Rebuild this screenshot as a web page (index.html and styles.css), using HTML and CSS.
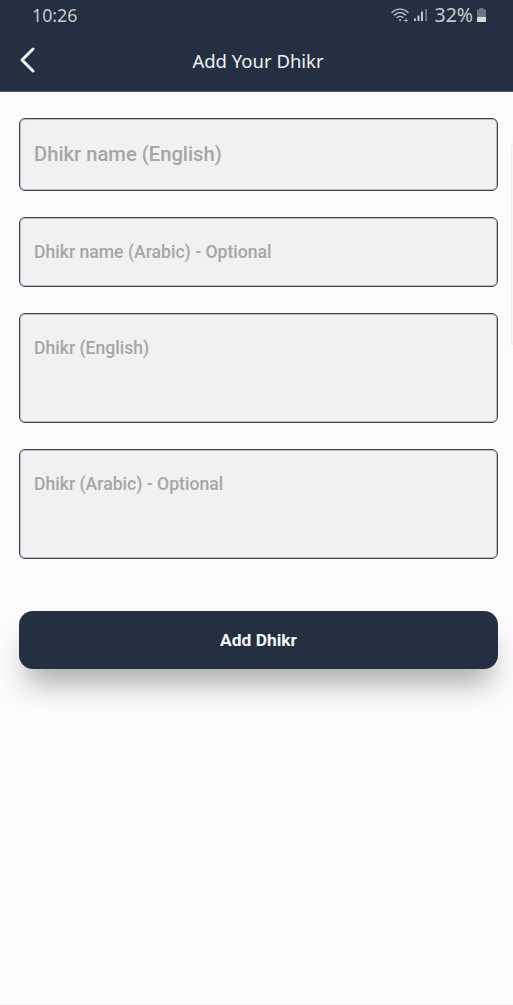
FILE: index.html
```html
<!DOCTYPE html>
<html lang="en">
<head>
<meta charset="utf-8">
<title>Add Your Dhikr</title>
<link rel="stylesheet" href="styles.css">
</head>
<body>
<div class="screen">
  <header class="header">
    <div class="status">
      <span class="time">10:26</span>
      <div class="status-right">
        <svg class="wifi" width="20" height="16" viewBox="0 0 20 16" fill="none" stroke="#c3c8ce" stroke-linecap="round">
          <path d="M1 5.5C5.5 1 12.500 1 17 5.500" stroke-width="1.300"/>
          <path d="M3.500 8C6.800 5 11.200 5 14.500 8" stroke-width="1.300"/>
          <path d="M6 10.500C8 9 10 9 12 10.500" stroke-width="1.300"/>
          <circle cx="9" cy="13" r="1" fill="#c3c8ce" stroke="none"/>
          <path d="M13.500 13.500h3M15 12v3" stroke-width=".8"/>
        </svg>
        <svg class="signal" width="14" height="14" viewBox="0 0 14 14" fill="#c3c8ce">
          <rect x="0" y="10.500" width="2" height="2.500"/>
          <rect x="3.500" y="7.500" width="2" height="5.500"/>
          <rect x="7" y="3.500" width="2" height="9.500"/>
          <rect x="11.500" y="1" width="1.200" height="12" opacity=".7"/>
        </svg>
        <span class="pct">32%</span>
        <svg class="battery" width="11" height="16" viewBox="0 0 11 16">
          <path d="M3.500 1h4v1.500H10V15H1V2.500h2.500z" fill="#6d7580"/>
          <rect x="1" y="10" width="9" height="5" fill="#d5d8dc"/>
        </svg>
      </div>
    </div>
    <div class="nav">
      <svg class="back" width="18" height="28" viewBox="0 0 18 28" fill="none" stroke="#f4f5f6" stroke-width="3" stroke-linecap="round" stroke-linejoin="round">
        <path d="M15 3 4 14l11 11"/>
      </svg>
      <h1 class="title">Add Your Dhikr</h1>
    </div>
  </header>
  <main class="content">
    <div class="side-panel"></div>
    <form class="form">
      <div class="field field-name"><span class="ph ph-lg">Dhikr name (English)</span></div>
      <div class="field field-sub"><span class="ph">Dhikr name (Arabic) - Optional</span></div>
      <div class="field field-area"><span class="ph">Dhikr (English)</span></div>
      <div class="field field-area"><span class="ph">Dhikr (Arabic) - Optional</span></div>
      <button class="submit" type="button">Add Dhikr</button>
    </form>
  </main>
</div>
</body>
</html>
```
FILE: styles.css
```css
* { box-sizing: border-box; }
html, body { margin: 0; padding: 0; }
body { background: #fbfbfb; font-family: Roboto, "Noto Sans", sans-serif; }
.screen { width: 513px; height: 1005px; display: flex; flex-direction: column; overflow: hidden; border-bottom: 1px solid #f3f3f3; }
.header { height: 92px; flex: none; background: #243041; border-bottom: 1px solid #4d5866; }
.status { height: 30px; padding: 0 26px 0 32px; display: flex; align-items: center; justify-content: space-between; color: #c6cace; }
.time { font-family: "Noto Sans", sans-serif; font-size: 17.800px; line-height: 30px; }
.status-right { display: flex; align-items: center; }
.wifi { margin-right: 3px; }
.signal { margin-right: 6px; }
.pct { font-family: "Noto Sans", sans-serif; font-size: 19.500px; line-height: 30px; margin-right: 3px; }
.nav { position: relative; height: 61px; display: flex; align-items: center; justify-content: center; }
.back { position: absolute; left: 18px; top: 16px; }
.title { margin: 0 0 1px 3px; font-family: "Noto Sans", sans-serif; font-weight: 400; font-size: 18.500px; color: #eef0f2; }
.content { position: relative; flex: 1; padding: 26px 15px 0 19px; }
.side-panel { position: absolute; right: -6px; top: 51px; width: 8px; height: 203px; background: #f7f7f7; border: 1px solid #eeeeee; border-radius: 5px; }
.form { display: flex; flex-direction: column; gap: 26px; width: 479px; }
.field { background: #f1f1f1; border: 1px solid #3b4657; box-shadow: inset 0 0 0 1px rgba(59, 70, 87, .3); border-radius: 6px; padding-left: 14px; color: #a6a6a6; }
.field-name { height: 73px; display: flex; align-items: center; padding-bottom: 2px; }
.field-sub { height: 70px; display: flex; align-items: center; }
.field-area { height: 110px; padding-top: 24px; }
.ph { font-size: 17.600px; font-weight: 500; line-height: 20px; display: block; }
.ph-lg { font-size: 20.200px; }
.submit { display: block; width: 479px; height: 58px; margin-top: 26px; background: #243041; color: #f5f6f7; border: 0; border-radius: 14px; font-family: Roboto, sans-serif; font-weight: 700; font-size: 17.400px; padding: 0; box-shadow: 0 22px 28px -8px rgba(0, 0, 0, .32); }
```
